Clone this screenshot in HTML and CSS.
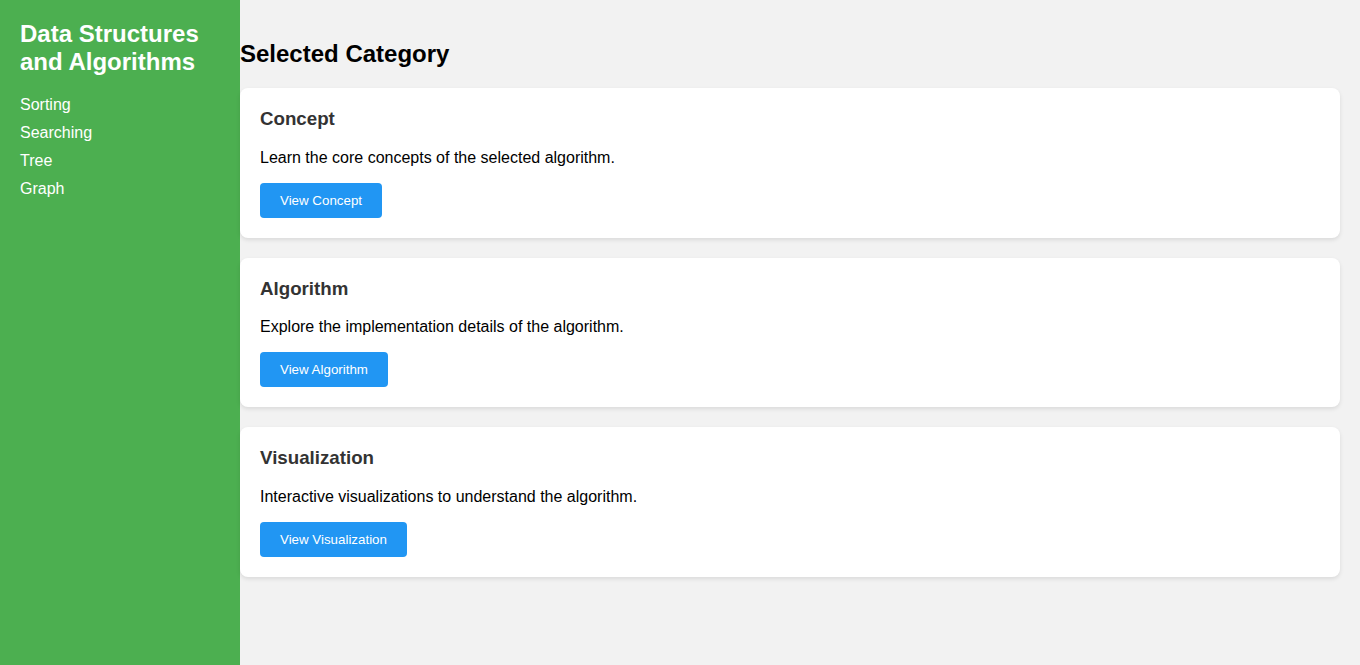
FILE: index.html
```html
<!DOCTYPE html>
<html>
<head>
<meta charset="utf-8">
<link rel="stylesheet" href="styles.css">
</head>
<body>
<div class="layout">
  <aside class="sidebar">
    <h2 class="brand">Data Structures and Algorithms</h2>
    <ul class="nav">
      <li><a href="#">Sorting</a></li>
      <li><a href="#">Searching</a></li>
      <li><a href="#">Tree</a></li>
      <li><a href="#">Graph</a></li>
    </ul>
  </aside>
  <main class="main">
    <h2 class="page-title">Selected Category</h2>
    <section class="card">
      <h3 class="card-title">Concept</h3>
      <p class="card-text">Learn the core concepts of the selected algorithm.</p>
      <button class="btn">View Concept</button>
    </section>
    <section class="card">
      <h3 class="card-title">Algorithm</h3>
      <p class="card-text">Explore the implementation details of the algorithm.</p>
      <button class="btn">View Algorithm</button>
    </section>
    <section class="card">
      <h3 class="card-title">Visualization</h3>
      <p class="card-text">Interactive visualizations to understand the algorithm.</p>
      <button class="btn">View Visualization</button>
    </section>
  </main>
</div>
</body>
</html>
```
FILE: styles.css
```css
html, body {
  margin: 0;
  padding: 0;
  height: 100%;
}
body {
  font-family: "Liberation Sans", Arial, sans-serif;
  background: #f2f2f2;
  color: #000;
}
.layout {
  display: flex;
  min-height: 100vh;
}
.sidebar {
  width: 200px;
  flex: 0 0 200px;
  background: #4caf50;
  color: #fff;
  padding: 20px;
}
.brand {
  margin: 0 0 20px;
  font-size: 24px;
  font-weight: bold;
  line-height: 28px;
}
.nav {
  list-style: none;
  margin: 0;
  padding: 0;
}
.nav li {
  margin-bottom: 10px;
  line-height: 18px;
}
.nav a {
  color: #fff;
  text-decoration: none;
  font-size: 16px;
}
.main {
  flex: 1;
  padding: 20px 20px 20px 0;
}
.page-title {
  margin: 20px 0;
  font-size: 24px;
  line-height: 28px;
  font-weight: bold;
}
.card {
  background: #fff;
  border-radius: 8px;
  box-shadow: 0 2px 4px rgba(0, 0, 0, 0.1);
  padding: 20px;
  margin-bottom: 20px;
}
.card-title {
  margin: 0 0 18.72px;
  font-size: 18.72px;
  line-height: 22px;
  color: #333;
}
.card-text {
  margin: 0 0 16px;
  font-size: 16px;
  line-height: 18px;
}
.btn {
  display: block;
  background: #2196f3;
  color: #fff;
  border: none;
  border-radius: 4px;
  padding: 10px 20px;
  font-family: "Liberation Sans", Arial, sans-serif;
  font-size: 13.33px;
  line-height: 15px;
  cursor: pointer;
}
```
